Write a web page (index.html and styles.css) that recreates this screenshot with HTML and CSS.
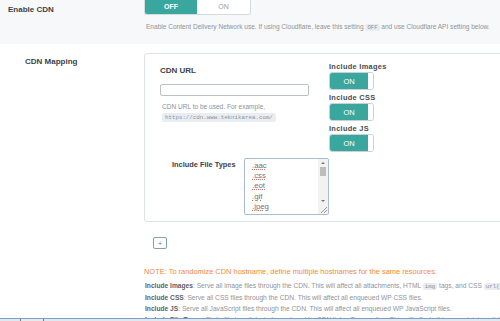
FILE: index.html
```html
<!DOCTYPE html>
<html lang="en">
<head>
  <meta charset="UTF-8" />
  <title>CDN Settings</title>
  <link rel="stylesheet" href="styles.css">
</head>
<body>

<div class="row-top">
  <div class="row-label">Enable CDN</div>
  <div class="row-field">
    <div class="switch">
      <span class="sw-off active">OFF</span>
      <span class="sw-on">ON</span>
    </div>
    <p class="help">Enable Content Delivery Network use. If using Cloudflare, leave this setting <code>OFF</code> and use Cloudflare API setting below.</p>
  </div>
</div>

<div class="row-map">
  <div class="row-label map-label">CDN Mapping</div>
  <div class="row-field">
    <div class="map-box">
      <div class="map-top">
        <div class="url-col">
          <div class="field-title">CDN URL</div>
          <input class="url-input" type="text">
          <p class="help small">CDN URL to be used. For example,</p>
          <code class="code-chip">https://cdn.www.teknikarea.com/</code>
        </div>
        <div class="inc-col">
          <div class="inc-title">Include Images</div>
          <div class="mini-switch"><span class="mini-on">ON</span><span class="mini-off"></span></div>
          <div class="inc-title">Include CSS</div>
          <div class="mini-switch"><span class="mini-on">ON</span><span class="mini-off"></span></div>
          <div class="inc-title">Include JS</div>
          <div class="mini-switch"><span class="mini-on">ON</span><span class="mini-off"></span></div>
        </div>
      </div>
      <div class="types-row">
        <div class="types-label">Include File Types</div>
        <div class="types-list">
          <div class="types-items">
            <span>.aac</span>
            <span>.css</span>
            <span>.eot</span>
            <span>.gif</span>
            <span>.jpeg</span>
          </div>
          <div class="scrollbar">
            <span class="arrow-up"></span>
            <span class="thumb"></span>
            <span class="track"></span>
            <span class="arrow-down"></span>
          </div>
          <span class="grip"></span>
        </div>
      </div>
    </div>

    <button class="add-btn">+</button>

    <p class="note">NOTE: To randomize CDN hostname, define multiple hostnames for the same resources.</p>

    <div class="desc">
      <p><b>Include Images</b>: Serve all image files through the CDN. This will affect all attachments, HTML <code>img</code> tags, and CSS <code>url()</code> statements.</p>
      <p><b>Include CSS</b>: Serve all CSS files through the CDN. This will affect all enqueued WP CSS files.</p>
      <p><b>Include JS</b>: Serve all JavaScript files through the CDN. This will affect all enqueued WP JavaScript files.</p>
      <p><b>Include File Types</b>: Static file type links to be replaced by CDN links. One per line. This will affect all tags containing attributes.</p>
    </div>
  </div>
</div>

<div class="taskbar"><span class="tb-tab"></span></div>

</body>
</html>
```

FILE: styles.css
```css
* { margin: 0; padding: 0; box-sizing: border-box; }

body {
  font-family: 'Liberation Sans', Arial, sans-serif;
  width: 500px;
  height: 321px;
  overflow: hidden;
  background: #fff;
  color: #8a8d91;
}

code {
  font-family: 'Liberation Mono', monospace;
  background: #e9edf1;
  color: #8a9099;
  padding: 0 2px;
  border-radius: 2px;
}

/* top row */
.row-top {
  display: flex;
  height: 44px;
  background: #f7f8fa;
}

.row-label {
  width: 144px;
  flex-shrink: 0;
  padding: 5px 0 0 8px;
  font-size: 8px;
  font-weight: bold;
  color: #3d4247;
}

.row-field {
  flex: 1;
  min-width: 0;
  overflow: hidden;
}

.switch {
  display: flex;
  width: 107px;
  height: 15px;
  border: 1px solid #d5dadf;
  border-top: none;
  border-radius: 0 0 3px 3px;
  overflow: hidden;
  font-size: 7px;
  line-height: 14px;
  text-align: center;
}

.sw-off {
  width: 52px;
  background: #3aa79f;
  color: #fff;
  font-weight: bold;
}

.sw-on {
  flex: 1;
  background: #fff;
  color: #9aa0a6;
}

.help {
  margin-top: 7px;
  font-size: 6.55px;
  line-height: 9px;
  color: #8f9397;
  padding-left: 2px;
  white-space: nowrap;
}

.help code { font-size: 5.6px; }

/* mapping row */
.row-map {
  display: flex;
  padding-top: 9px;
}

.map-label { padding: 4px 0 0 25px; }

.map-box {
  width: 360px;
  height: 169px;
  border: 1px solid #dde2e7;
  border-radius: 3px;
}

.map-top { display: flex; }

.url-col {
  width: 184px;
  padding: 12px 0 0 15px;
}

.field-title {
  font-size: 8px;
  font-weight: bold;
  color: #3d4247;
}

.url-input {
  display: block;
  margin-top: 9px;
  width: 149px;
  height: 12px;
  border: 1px solid #b9c0c7;
  border-radius: 2px;
}

.help.small {
  margin-top: 6px;
  padding-left: 2px;
}

.code-chip {
  display: block;
  width: fit-content;
  margin: 2px 0 0 2px;
  font-size: 5.8px;
  line-height: 9px;
  padding: 0 3px;
}

.inc-col {
  padding-top: 8px;
}

.inc-title {
  font-size: 7.4px;
  font-weight: bold;
  letter-spacing: 0.3px;
  color: #484d52;
  line-height: 9px;
  margin-bottom: 1px;
}

.mini-switch {
  display: flex;
  width: 45px;
  height: 18px;
  margin-bottom: 3px;
  border: 1px solid #c9d0d6;
  border-radius: 3px;
  overflow: hidden;
}

.mini-on {
  width: 38px;
  background: #3aa79f;
  color: #fff;
  font-size: 7.5px;
  line-height: 17px;
  text-align: center;
}

.mini-off { flex: 1; background: #fff; }

.types-row {
  display: flex;
  margin-top: 3px;
}

.types-label {
  width: 99px;
  padding: 2px 0 0 27px;
  font-size: 7.4px;
  font-weight: bold;
  color: #3d4247;
  white-space: nowrap;
}

.types-list {
  position: relative;
  display: flex;
  width: 85px;
  height: 57px;
  border: 1px solid #a9bcd0;
  border-radius: 2px;
  overflow: hidden;
}

.types-items {
  flex: 1;
  display: flex;
  flex-direction: column;
  padding: 2px 0 0 7px;
  font-size: 7.8px;
  line-height: 10.2px;
  color: #6f7378;
}

.types-items span {
  text-decoration: underline dotted #d26a6a;
}

.scrollbar {
  width: 10px;
  display: flex;
  flex-direction: column;
  align-items: center;
  background: #f2f2f2;
}

.arrow-up, .arrow-down {
  width: 0;
  height: 0;
  margin: 3px 0;
  border-left: 2px solid transparent;
  border-right: 2px solid transparent;
}

.arrow-up { border-bottom: 2px solid #777; }
.arrow-down { border-top: 2px solid #777; margin-bottom: 12px; }

.thumb {
  width: 6px;
  height: 9px;
  background: #bdbdbd;
}

.track { flex: 1; }

.grip {
  position: absolute;
  right: 1px;
  bottom: 1px;
  width: 6px;
  height: 6px;
  background: linear-gradient(135deg, transparent 45%, #999 46%, #999 55%, transparent 56%, transparent 70%, #999 71%, #999 80%, transparent 81%);
}

.add-btn {
  display: block;
  margin: 15px 0 0 9px;
  width: 14px;
  height: 12px;
  border: 1px solid #7fa3a8;
  border-radius: 2px;
  background: #fff;
  color: #6a7c80;
  font-size: 7px;
  line-height: 9px;
}

.note {
  margin-top: 18px;
  font-size: 7.45px;
  color: #f08a3c;
  white-space: nowrap;
}

.desc {
  margin-top: 4px;
  padding-left: 1px;
}

.desc p {
  font-size: 6.65px;
  line-height: 11px;
  color: #8f9397;
  white-space: nowrap;
}

.desc b { color: #5d6267; }

.desc code { font-size: 5.8px; }

.taskbar {
  position: fixed;
  left: 0;
  right: 0;
  bottom: 0;
  height: 3px;
  border-top: 1px solid #7e9fc4;
  background: #dfe7f0;
}

.tb-tab {
  display: block;
  margin-left: 20px;
  width: 24px;
  height: 3px;
  border-left: 1px solid #777;
  border-right: 1px solid #777;
  background: #e9e9e9;
}
```
